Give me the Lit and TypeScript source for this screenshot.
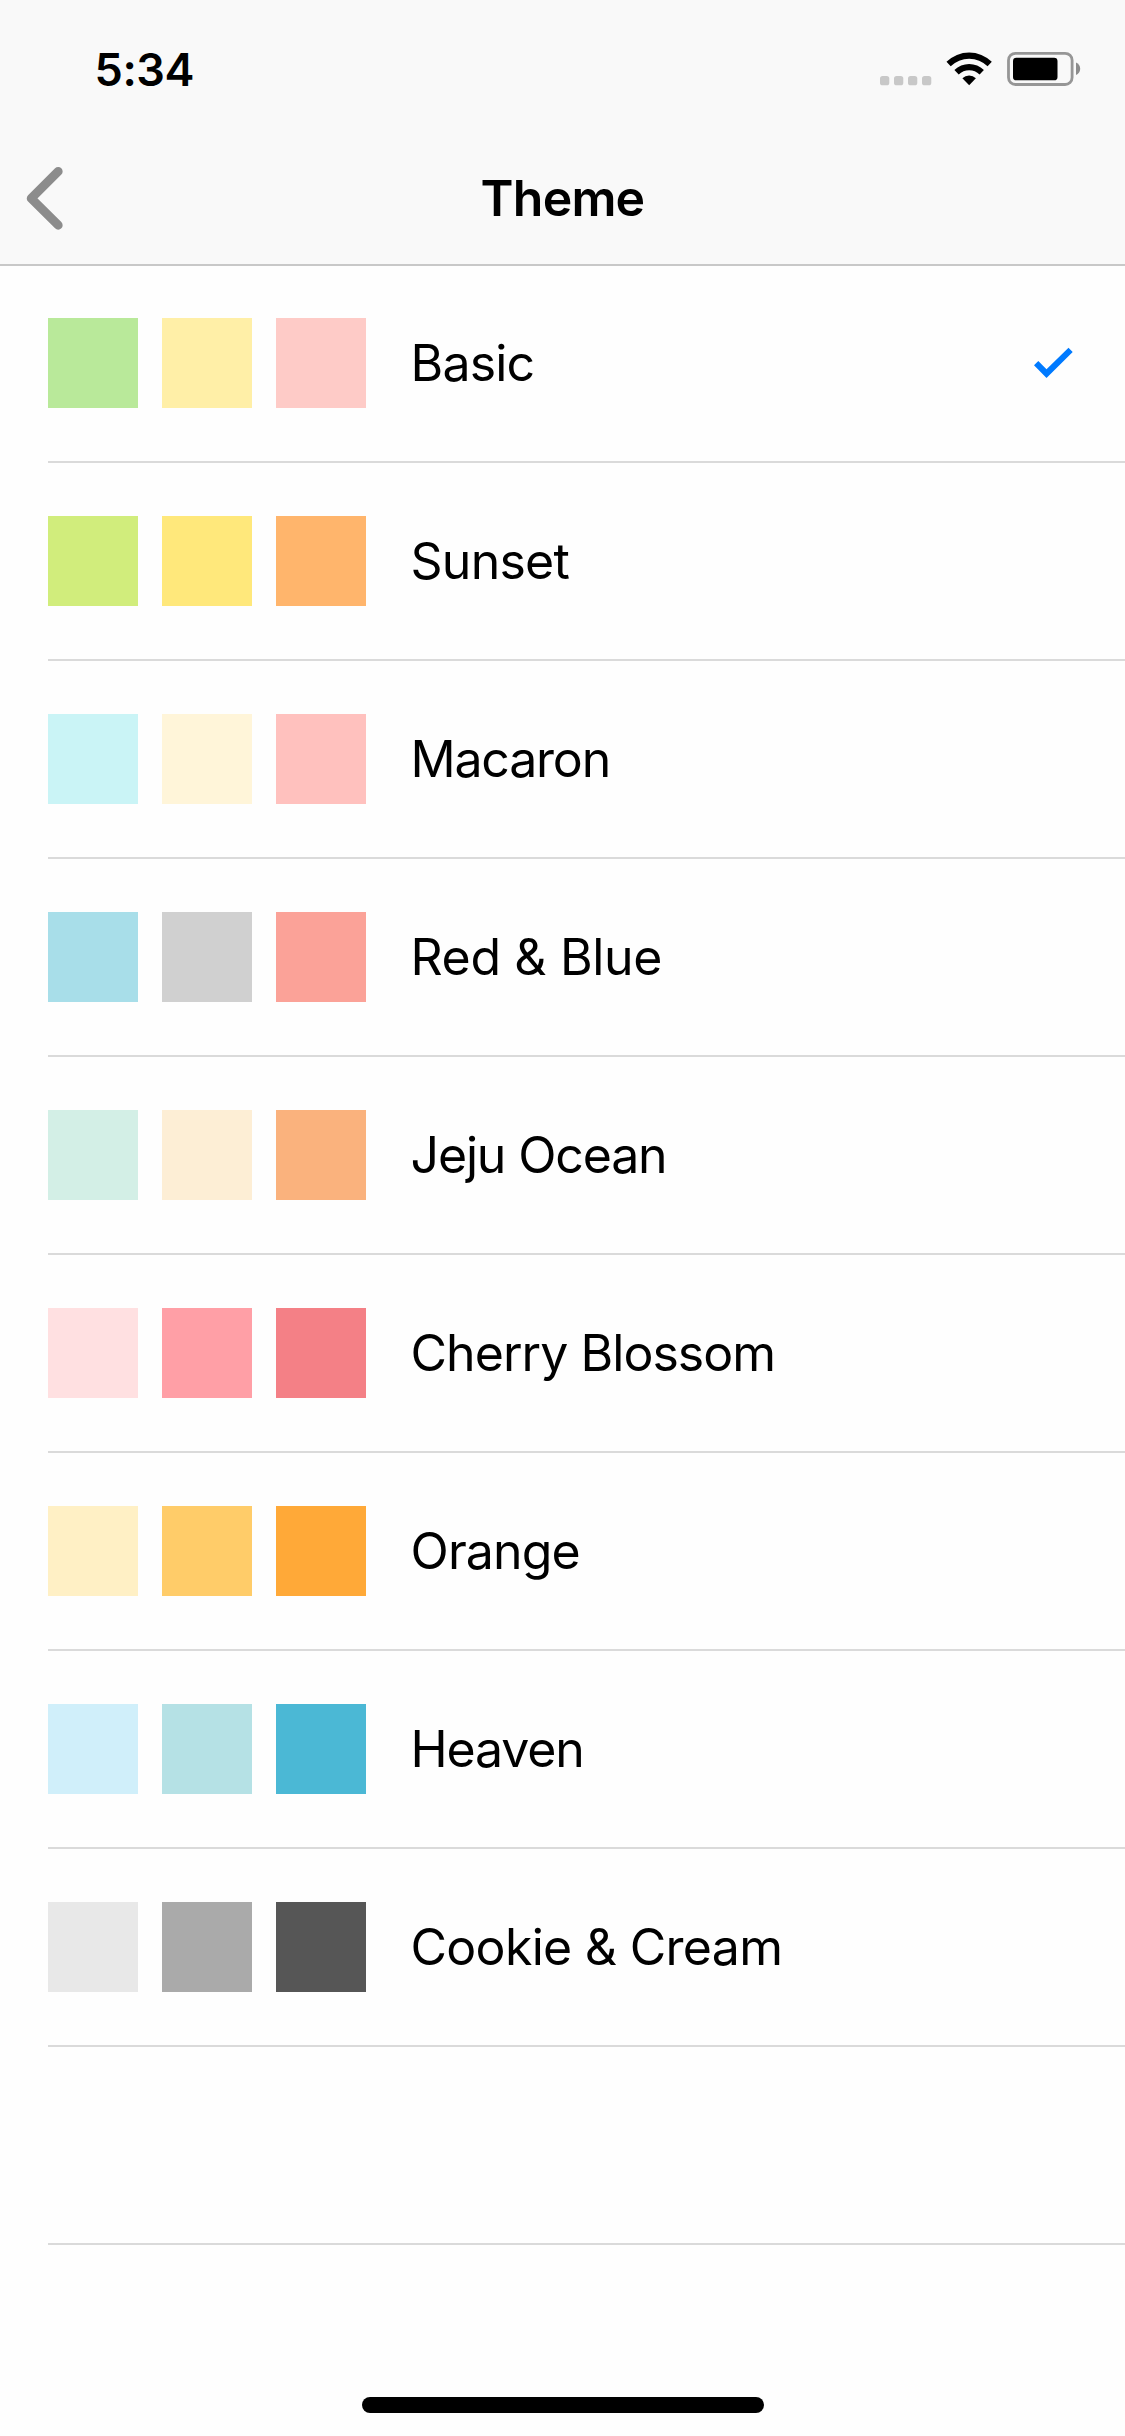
import { LitElement, html, css } from "lit";
import { customElement, property } from "lit/decorators.js";
import { styleMap } from "lit/directives/style-map.js";

interface Theme {
  name: string;
  // letter spacing of the name, in pixels
  tracking: number;
  colors: string[];
}

const THEMES: Theme[] = [
  { name: "Basic", tracking: -0.8, colors: ["#b9e99a", "#ffefa7", "#fecbc7"] },
  { name: "Sunset", tracking: -0.75, colors: ["#d1ed7c", "#ffe87b", "#ffb56c"] },
  { name: "Macaron", tracking: -1.2, colors: ["#caf4f6", "#fff5d9", "#ffc1be"] },
  { name: "Red & Blue", tracking: -0.35, colors: ["#a8dee9", "#d0d0d0", "#fba298"] },
  { name: "Jeju Ocean", tracking: -1.15, colors: ["#d3efe6", "#fdeed5", "#fab27d"] },
  { name: "Cherry Blossom", tracking: -0.95, colors: ["#ffe0e1", "#ff9fa6", "#f48086"] },
  { name: "Orange", tracking: -0.85, colors: ["#fff0c5", "#ffcc69", "#ffa938"] },
  { name: "Heaven", tracking: -1.15, colors: ["#d0effa", "#b5e1e5", "#4bb8d5"] },
  { name: "Cookie & Cream", tracking: -0.7, colors: ["#e8e8e8", "#aaaaaa", "#565656"] },
];

@customElement("status-bar")
class StatusBar extends LitElement {
  static styles = css`
    :host {
      display: flex;
      justify-content: space-between;
      height: 132px;
    }
    .time {
      padding: 47px 0 0 94.5px;
      font-size: 45px;
      line-height: 46px;
      font-weight: 600;
      letter-spacing: -0.4px;
    }
    .icons {
      display: block;
      width: 265px;
      height: 80px;
      padding-top: 30px;
    }
  `;

  render() {
    return html`
      <div class="time">5:34</div>
      <svg class="icons" viewBox="0 0 265 80">
        <g fill="#c8c8c8">
          <rect x="20" y="46" width="9.3" height="9.3" rx="2.6" />
          <rect x="34" y="46" width="9.3" height="9.3" rx="2.6" />
          <rect x="48" y="46" width="9.3" height="9.3" rx="2.6" />
          <rect x="62" y="46" width="9.3" height="9.3" rx="2.6" />
        </g>
        <path d="M86.5 31.8A32.4 32.4 0 0 1 131.8 31.8L127.6 36.3A26.3 26.3 0 0 0 90.7 36.3Z" />
        <path d="M94.4 40A21.2 21.2 0 0 1 123.9 40L119.6 44.4A15 15 0 0 0 98.7 44.4Z" />
        <path d="M102.4 48.2A9.8 9.8 0 0 1 115.9 48.2L109.15 55.2Z" />
        <rect x="148.5" y="23.3" width="63.6" height="31.2" rx="7" fill="none" stroke="#969696" stroke-width="2.8" />
        <rect x="153" y="27.7" width="44.5" height="22.6" rx="3.4" />
        <path d="M216 32.5C218.6 33.5 220.2 36 220.2 38.8S218.6 44.1 216 45.1Z" fill="#8c8c8c" />
      </svg>
    `;
  }
}

@customElement("nav-bar")
class NavBar extends LitElement {
  @property() heading = "";

  static styles = css`
    :host {
      display: grid;
      grid-template-columns: 120px 1fr 120px;
      align-items: center;
      height: 132px;
      border-bottom: 2px solid #c8c8c8;
    }
    .back {
      display: block;
      width: 120px;
      height: 132px;
    }
    .title {
      text-align: center;
      font-size: 50px;
      line-height: 60px;
      font-weight: 600;
      letter-spacing: -0.8px;
    }
  `;

  render() {
    return html`
      <svg class="back" viewBox="0 0 120 132">
        <path
          d="M58.2 39.4L31.2 66.4L58.2 93.2"
          fill="none"
          stroke="#8c8c8c"
          stroke-width="8.9"
          stroke-linecap="round"
          stroke-linejoin="round"
        />
      </svg>
      <div class="title">${this.heading}</div>
    `;
  }
}

@customElement("theme-row")
class ThemeRow extends LitElement {
  @property({ attribute: false }) theme?: Theme;
  @property({ type: Boolean }) selected = false;

  static styles = css`
    :host {
      display: block;
      padding-left: 48px;
    }
    .row {
      display: flex;
      align-items: center;
      box-sizing: border-box;
      height: 198px;
      padding: 0 52px 1px 0;
      border-bottom: 2px solid #dadada;
    }
    .swatches {
      display: flex;
      gap: 24px;
    }
    .swatch {
      width: 90px;
      height: 90px;
    }
    .name {
      flex: 1;
      padding-left: 44.5px;
      font-size: 50px;
      line-height: 60px;
    }
    .check {
      width: 40px;
      height: 32px;
    }
  `;

  render() {
    return html`
      <div class="row">
        ${this.theme
          ? html`
              <div class="swatches">
                ${this.theme.colors.map(
                  (c) => html`<div class="swatch" style=${styleMap({ backgroundColor: c })}></div>`
                )}
              </div>
              <div class="name" style=${styleMap({ letterSpacing: `${this.theme.tracking}px` })}>${this.theme.name}</div>
            `
          : null}
        ${this.selected
          ? html`<svg class="check" viewBox="0 0 40 32">
              <path d="M1 18.2L5.3 14L13.5 22.2L35.5 0.8L39.7 5L13.5 31Z" fill="#007aff" />
            </svg>`
          : null}
      </div>
    `;
  }
}

@customElement("app-root")
class AppRoot extends LitElement {
  static styles = css`
    :host {
      display: flex;
      flex-direction: column;
      width: 1125px;
      height: 2436px;
      overflow: hidden;
      background: #fefefe;
      color: #000;
      font-family: Inter, "Liberation Sans", sans-serif;
    }
    .header {
      background: #f9f9f9;
    }
    .list {
      flex: 1;
      margin-top: -1px;
    }
    .home {
      display: flex;
      justify-content: center;
      padding-bottom: 23.5px;
    }
    .bar {
      width: 402px;
      height: 15.5px;
      border-radius: 8px;
      background: #000;
    }
  `;

  render() {
    return html`
      <div class="header">
        <status-bar></status-bar>
        <nav-bar heading="Theme"></nav-bar>
      </div>
      <div class="list">
        ${THEMES.map((t, i) => html`<theme-row .theme=${t} ?selected=${i === 0}></theme-row>`)}
        <theme-row></theme-row>
      </div>
      <div class="home"><div class="bar"></div></div>
    `;
  }
}
